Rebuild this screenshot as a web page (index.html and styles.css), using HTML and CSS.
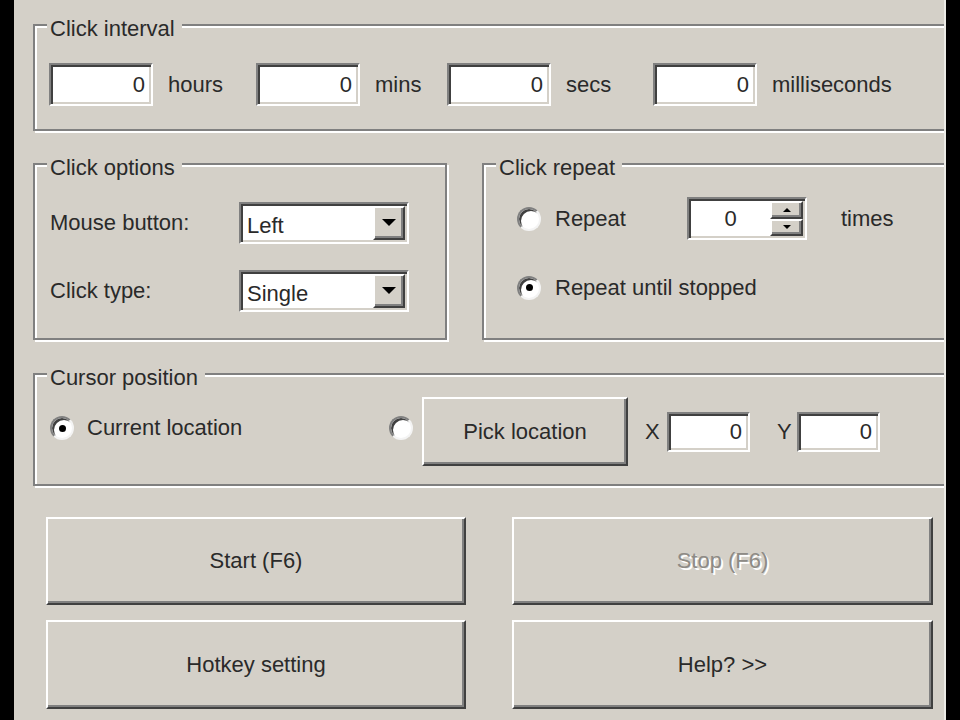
FILE: index.html
```html
<!DOCTYPE html>
<html>
<head>
<meta charset="utf-8">
<title>Auto Clicker</title>
<link rel="stylesheet" href="styles.css">
</head>
<body>
<div class="window">
  <div class="group g-interval">
    <span class="group-title">Click interval</span>
    <div class="interval-row">
      <div class="field num">0</div><span class="unit">hours</span>
      <div class="field num">0</div><span class="unit">mins</span>
      <div class="field num">0</div><span class="unit">secs</span>
      <div class="field num">0</div><span class="unit">milliseconds</span>
    </div>
  </div>

  <div class="group-row">
    <div class="group g-options">
      <span class="group-title">Click options</span>
      <div class="options-grid">
        <span class="label">Mouse button:</span>
        <div class="combo">
          <span class="combo-text">Left</span>
          <span class="combo-btn raised">
            <svg width="14" height="8" viewBox="0 0 14 8"><path d="M0 0H14L7 7Z" fill="#000"/></svg>
          </span>
        </div>
        <span class="label">Click type:</span>
        <div class="combo">
          <span class="combo-text">Single</span>
          <span class="combo-btn raised">
            <svg width="14" height="8" viewBox="0 0 14 8"><path d="M0 0H14L7 7Z" fill="#000"/></svg>
          </span>
        </div>
      </div>
    </div>

    <div class="group g-repeat">
      <span class="group-title">Click repeat</span>
      <div class="repeat-grid">
        <span class="radio"></span>
        <span class="label">Repeat</span>
        <div class="spin">
          <span class="spin-text">0</span>
          <span class="spin-btns">
            <span class="spin-btn raised"><svg width="8" height="4" viewBox="0 0 8 4"><path d="M0 4H8L4 0Z" fill="#000"/></svg></span>
            <span class="spin-btn raised"><svg width="8" height="4" viewBox="0 0 8 4"><path d="M0 0H8L4 4Z" fill="#000"/></svg></span>
          </span>
        </div>
        <span class="label times">times</span>
        <span class="radio checked"></span>
        <span class="label wide">Repeat until stopped</span>
      </div>
    </div>
  </div>

  <div class="group g-cursor">
    <span class="group-title">Cursor position</span>
    <div class="cursor-grid">
      <span class="radio checked lift"></span>
      <span class="label lift">Current location</span>
      <span class="radio lift"></span>
      <div class="button raised pick">Pick location</div>
      <span class="label axis ax-x">X</span>
      <div class="field num small">0</div>
      <span class="label axis ax-y">Y</span>
      <div class="field num small">0</div>
    </div>
  </div>

  <div class="buttons">
    <div class="button raised big">Start (F6)</div>
    <div class="button raised big disabled">Stop (F6)</div>
    <div class="button raised big">Hotkey setting</div>
    <div class="button raised big">Help? &gt;&gt;</div>
  </div>
</div>
</body>
</html>
```
FILE: styles.css
```css
html, body {
  margin: 0;
  padding: 0;
  background: #000;
  width: 960px;
  height: 720px;
  overflow: hidden;
}

.window {
  margin-left: 14px;
  width: 932px;
  height: 720px;
  box-sizing: border-box;
  background: #d4d0c8;
  border-right: 2px solid #ecebe6;
  padding: 24px 0 0 19px;
  overflow: hidden;
  font-family: "Liberation Sans", Arial, sans-serif;
  font-size: 22px;
  color: #2a2a2a;
}

/* etched group box */
.group {
  position: relative;
  box-sizing: border-box;
  border: 2px solid #808080;
  box-shadow: inset 2px 2px 0 #fff, 2px 2px 0 #fff;
}

.group-title {
  position: absolute;
  top: -10px;
  left: 12px;
  padding: 0 7px 0 3px;
  line-height: 26px;
  background: #d4d0c8;
  white-space: nowrap;
}

.g-interval {
  width: 940px;
  height: 107px;
}

.interval-row {
  display: grid;
  grid-template-columns: 104px 103px 104px 87px 104px 102px 104px auto;
  align-items: center;
  padding: 37px 0 0 14px;
}

.unit {
  padding-left: 15px;
  white-space: nowrap;
}

/* sunken edit field */
.field {
  box-sizing: border-box;
  width: 104px;
  height: 43px;
  background: #fff;
  border: 2px solid;
  border-color: #808080 #fff #fff #808080;
  box-shadow: inset 2px 2px 0 #404040, inset -2px -2px 0 #d4d0c8;
  line-height: 39px;
}

.num {
  text-align: right;
  padding-right: 6px;
}

.field.small {
  width: 83px;
  height: 40px;
  line-height: 36px;
}

.group-row {
  display: flex;
  gap: 35px;
  margin-top: 32px;
}

.g-options {
  width: 414px;
  height: 177px;
  flex: none;
}

.g-repeat {
  width: 500px;
  height: 177px;
  flex: none;
}

.options-grid {
  display: grid;
  grid-template-columns: 189px 170px;
  row-gap: 26px;
  align-items: center;
  padding: 37px 0 0 15px;
}

.label {
  white-space: nowrap;
}

.combo {
  box-sizing: border-box;
  width: 170px;
  height: 42px;
  display: flex;
  background: #fff;
  border: 2px solid;
  border-color: #808080 #fff #fff #808080;
  box-shadow: inset 2px 2px 0 #404040, inset -2px -2px 0 #d4d0c8;
  padding: 2px;
}

.combo-text {
  flex: 1;
  padding-left: 4px;
  line-height: 36px;
  padding-top: 2px;
}

/* raised 3D element */
.raised {
  box-sizing: border-box;
  background: #d4d0c8;
  border: 2px solid;
  border-color: #fff #404040 #404040 #fff;
  box-shadow: inset -2px -2px 0 #808080;
}

.combo-btn {
  width: 32px;
  display: flex;
  align-items: center;
  justify-content: center;
}

.repeat-grid {
  display: grid;
  grid-template-columns: 38px 132px 120px auto;
  grid-template-rows: 43px 43px;
  row-gap: 26px;
  align-items: center;
  padding: 32px 0 0 33px;
}

.repeat-grid .wide {
  grid-column: 2 / 5;
}

.times {
  padding-left: 34px;
}

.spin {
  box-sizing: border-box;
  width: 120px;
  height: 43px;
  display: flex;
  background: #fff;
  border: 2px solid;
  border-color: #808080 #fff #fff #808080;
  box-shadow: inset 2px 2px 0 #404040, inset -2px -2px 0 #d4d0c8;
  padding: 2px;
}

.spin-text {
  flex: 1;
  text-align: center;
  line-height: 35px;
}

.spin-btns {
  width: 33px;
  display: flex;
  flex-direction: column;
}

.spin-btn {
  flex: 1;
  display: flex;
  align-items: center;
  justify-content: center;
}

.radio {
  box-sizing: border-box;
  width: 24px;
  height: 24px;
  border-radius: 50%;
  background: #fff;
  border: 2px solid;
  border-color: #808080 #f4f4f4 #f4f4f4 #808080;
  box-shadow: inset 2px 2px 0 #404040;
  display: flex;
  align-items: center;
  justify-content: center;
}

.radio.checked::after {
  content: "";
  width: 7px;
  height: 7px;
  border-radius: 50%;
  background: #000;
}

.g-cursor {
  width: 940px;
  height: 113px;
  margin-top: 33px;
}

.cursor-grid {
  display: grid;
  grid-template-columns: 37px 302px 33px 206px 39px 83px 47px 83px;
  grid-template-rows: 69px;
  align-items: center;
  padding: 22px 0 0 15px;
}

.lift {
  margin-bottom: 7px;
}

.button {
  display: flex;
  align-items: center;
  justify-content: center;
  white-space: nowrap;
}

.pick {
  height: 69px;
}

.axis {
  padding-left: 17px;
}

.ax-y {
  padding-left: 27px;
}

.buttons {
  display: grid;
  grid-template-columns: 420px 421px;
  grid-template-rows: 88px 89px;
  column-gap: 46px;
  row-gap: 15px;
  margin: 31px 0 0 13px;
}

.disabled {
  color: #8e8b86;
  text-shadow: 2px 2px 0 #fff;
}
```
